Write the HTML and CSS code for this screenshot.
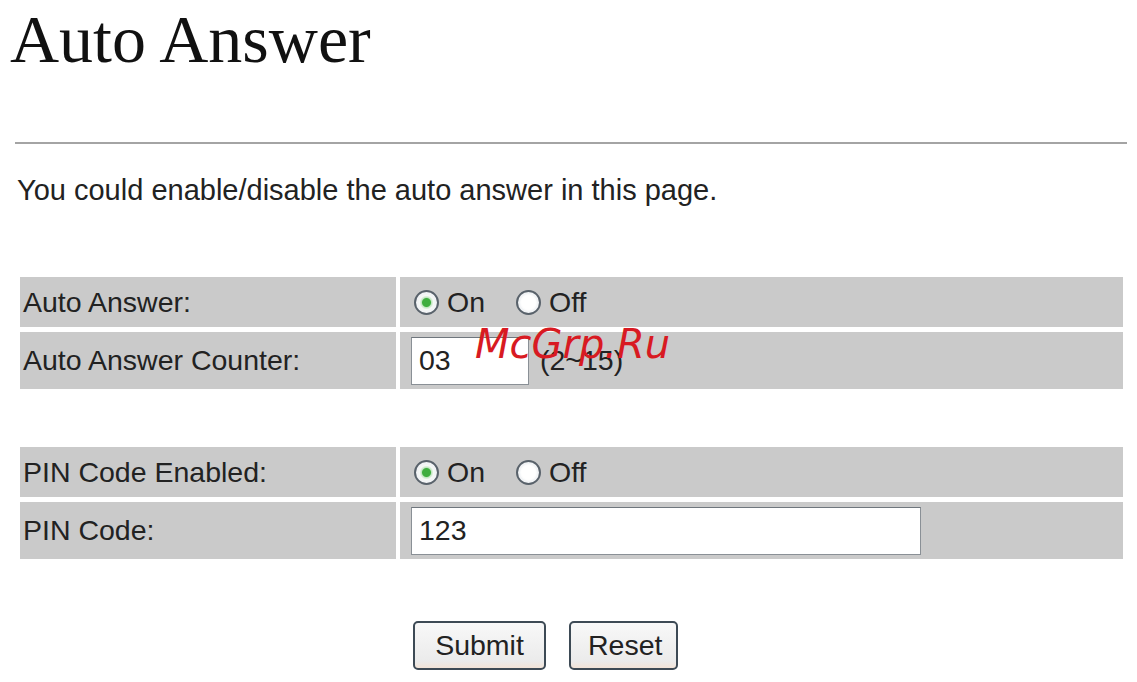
FILE: index.html
```html
<!DOCTYPE html>
<html lang="en">
<head>
  <meta charset="UTF-8" />
  <title>Auto Answer</title>
  <link rel="stylesheet" href="styles.css">
</head>
<body>
  <h1>Auto Answer</h1>
  <hr />
  <p class="intro">You could enable/disable the auto answer in this page.</p>

  <form id="auto-form">
    <div class="grid">
      <div class="label">Auto Answer:</div>
      <div class="value">
        <label class="opt"><input type="radio" name="auto" value="on" checked /> On</label>
        <label class="opt"><input type="radio" name="auto" value="off" /> Off</label>
      </div>
      <div class="label">Auto Answer Counter:</div>
      <div class="value">
        <input type="text" class="field short" value="03" />
        <span class="hint">(2~15)</span>
      </div>
    </div>

    <div class="grid">
      <div class="label">PIN Code Enabled:</div>
      <div class="value">
        <label class="opt"><input type="radio" name="pin" value="on" checked /> On</label>
        <label class="opt"><input type="radio" name="pin" value="off" /> Off</label>
      </div>
      <div class="label">PIN Code:</div>
      <div class="value">
        <input type="text" class="field long" value="123" />
      </div>
    </div>

    <div class="actions">
      <div class="buttons">
        <button type="submit">Submit</button>
        <button type="reset">Reset</button>
      </div>
    </div>
  </form>

  <div class="watermark">McGrp.Ru</div>
</body>
</html>
```

FILE: styles.css
```css
*, *::before, *::after { box-sizing: border-box; }
body {
  margin: 0;
  padding: 0 0 0 10px;
  background: #fff;
  color: #222;
  font-family: "Liberation Sans", Arial, sans-serif;
  position: relative;
}
h1 {
  margin: 0;
  padding-top: 1px;
  font-family: "Liberation Serif", "Times New Roman", serif;
  font-weight: normal;
  font-size: 68px;
  line-height: 76px;
  color: #111;
}
hr {
  margin: 65px 10px 0 5px;
  border: none;
  border-top: 2px solid #a4a4a4;
  height: 0;
}
.intro {
  margin: 29px 0 0 7px;
  font-size: 29px;
  line-height: 34px;
}

/* form rows */
.grid {
  margin: 70px 0 0 10px;
  width: 1103px;
  display: grid;
  grid-template-columns: 376px 1fr;
  grid-template-rows: 50px 57px;
  gap: 5px 4px;
}
.grid + .grid { margin-top: 58px; }
.label, .value {
  background: #cacaca;
  display: flex;
  align-items: center;
  font-size: 28.5px;
}
.label { padding-left: 3px; }
.value { padding-left: 11px; gap: 11px; }
.opt {
  display: flex;
  align-items: center;
  gap: 8px;
  margin-left: 3px;
  margin-right: 17px;
}
.opt input {
  appearance: none;
  margin: 0;
  width: 25px;
  height: 25px;
  border-radius: 50%;
  border: 2px solid #59626b;
  background: radial-gradient(circle, #fff 45%, #e4e8ec 100%);
  box-shadow: inset 0 0 0 2px #f2f4f6;
}
.opt input:checked {
  background: radial-gradient(circle, #3fae3f 0 4px, #bfe6bf 5px, #f6f8f6 7px, #e4e8ec 100%);
}
.field {
  height: 48px;
  font-family: inherit;
  font-size: 28.5px;
  color: #222;
  padding: 0 7px;
  border: 1px solid #8a9096;
  border-top-color: #6f767d;
  background: #fff;
}
.short { width: 118px; }
.long { width: 510px; }

.actions {
  margin: 62px 0 0 10px;
  display: grid;
  grid-template-columns: 376px 1fr;
  column-gap: 4px;
}
.buttons {
  grid-column: 2;
  display: flex;
  gap: 23px;
  padding-left: 13px;
}
button {
  height: 49px;
  padding: 0 17px;
  font-family: inherit;
  font-size: 28.5px;
  color: #222;
  border: 2px solid #3d4a55;
  border-radius: 5px;
  background: linear-gradient(#f8f8f8, #ebebeb 85%, #f3e4d8);
}
button[type="submit"] { width: 133px; }
button[type="reset"] { width: 109px; }

.watermark {
  position: absolute;
  left: 475px;
  top: 324px;
  font-family: "DejaVu Sans", sans-serif;
  font-style: oblique;
  font-size: 40px;
  line-height: 40px;
  color: #d81a22;
}
```
